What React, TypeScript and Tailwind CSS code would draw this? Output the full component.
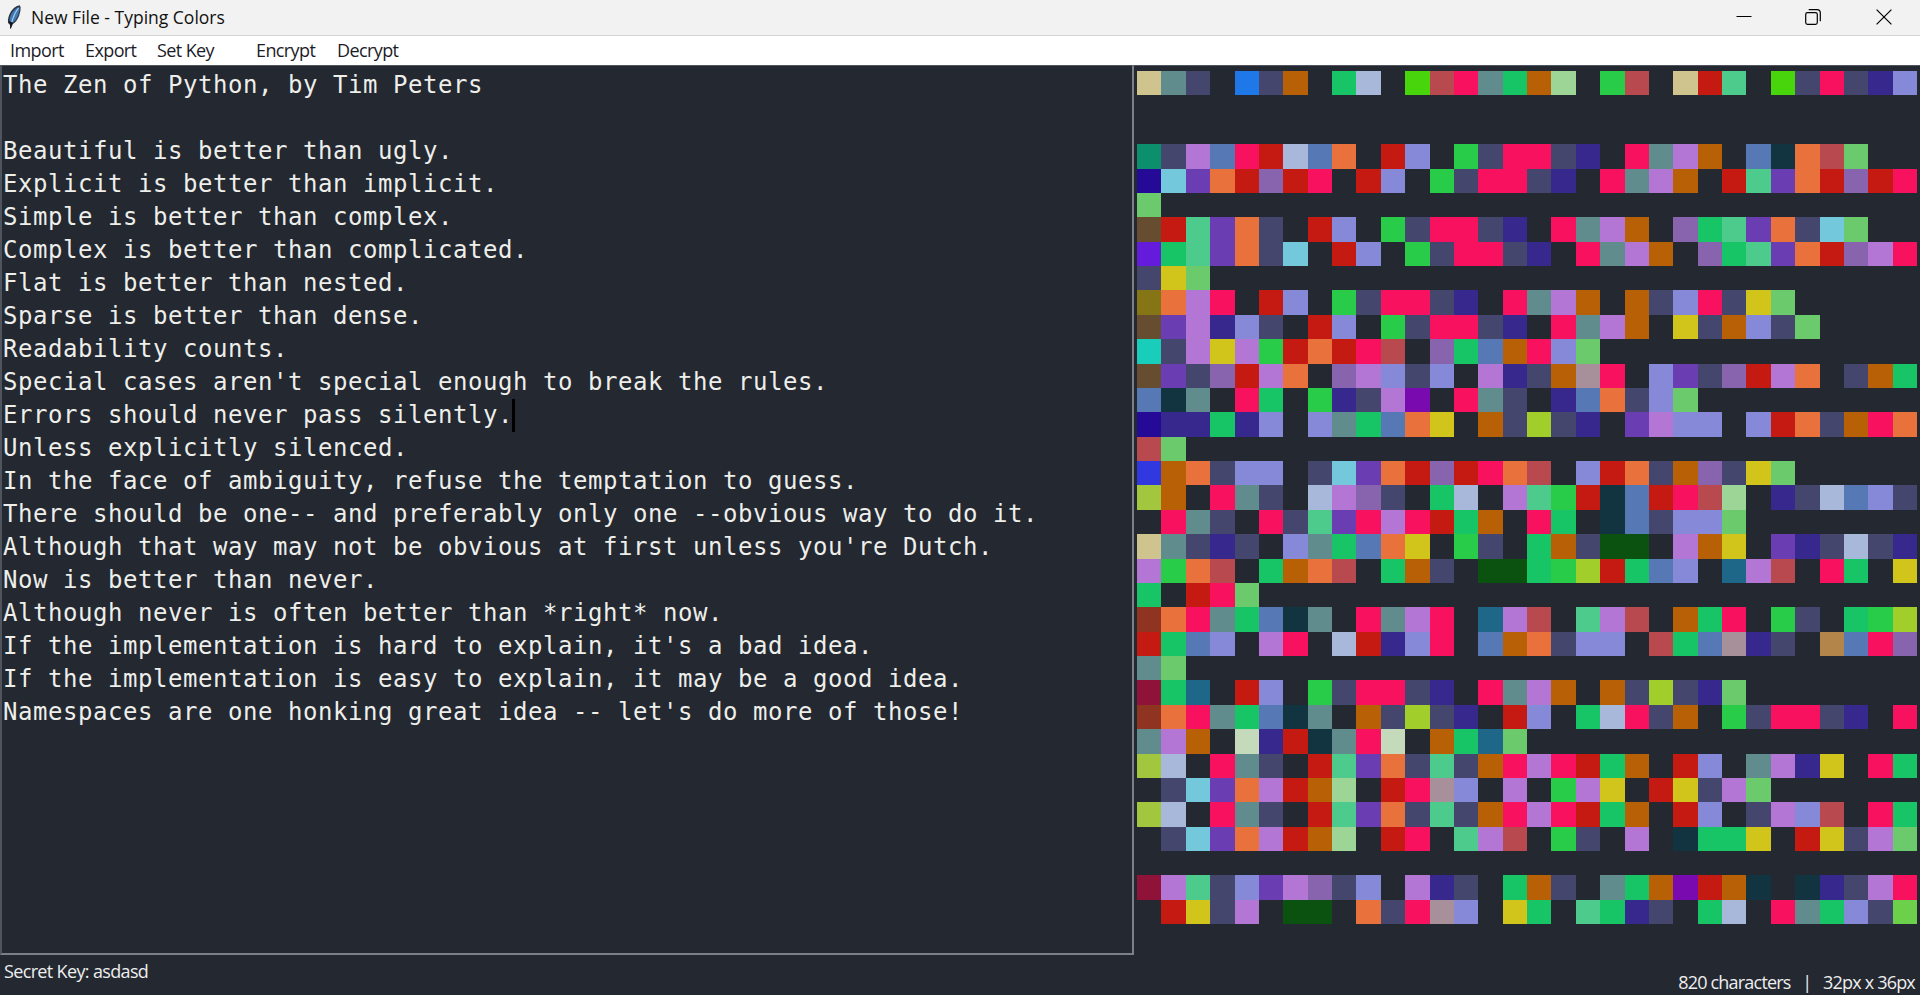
const COLUMNS = 32;
const ROWS = 36;

const LINES: string[] = [
  'The Zen of Python, by Tim Peters',
  '',
  'Beautiful is better than ugly.',
  'Explicit is better than implicit.',
  'Simple is better than complex.',
  'Complex is better than complicated.',
  'Flat is better than nested.',
  'Sparse is better than dense.',
  'Readability counts.',
  "Special cases aren't special enough to break the rules.",
  'Errors should never pass silently.',
  'Unless explicitly silenced.',
  'In the face of ambiguity, refuse the temptation to guess.',
  'There should be one-- and preferably only one --obvious way to do it.',
  "Although that way may not be obvious at first unless you're Dutch.",
  'Now is better than never.',
  'Although never is often better than *right* now.',
  "If the implementation is hard to explain, it's a bad idea.",
  'If the implementation is easy to explain, it may be a good idea.',
  "Namespaces are one honking great idea -- let's do more of those!",
];

const CARET_LINE = 10;

const COLORS: Record<string, string> = {
  T: 'bg-[#cfc48e]',
  h: 'bg-[#608c8e]',
  e: 'bg-[#45466e]',
  Z: 'bg-[#1f78e8]',
  n: 'bg-[#b76005]',
  o: 'bg-[#18c566]',
  f: 'bg-[#a8b8da]',
  P: 'bg-[#49d50b]',
  y: 'bg-[#b84a4f]',
  t: 'bg-[#f8115e]',
  ',': 'bg-[#9cd595]',
  b: 'bg-[#28cc49]',
  i: 'bg-[#c41a12]',
  m: 'bg-[#4dcb8c]',
  r: 'bg-[#37288e]',
  s: 'bg-[#8688d8]',
  B: 'bg-[#0b8f6d]',
  a: 'bg-[#b476d5]',
  u: 'bg-[#5678b4]',
  l: 'bg-[#e8713c]',
  g: 'bg-[#123440]',
  '.': 'bg-[#6aca6c]',
  E: 'bg-[#240a96]',
  x: 'bg-[#74c8db]',
  p: 'bg-[#6a3db3]',
  c: 'bg-[#8964ae]',
  S: 'bg-[#674d30]',
  C: 'bg-[#641bdb]',
  d: 'bg-[#d1c51b]',
  F: 'bg-[#867515]',
  R: 'bg-[#18cdb9]',
  k: 'bg-[#780ab0]',
  "'": 'bg-[#a8909a]',
  U: 'bg-[#3238e0]',
  v: 'bg-[#a1ce2b]',
  I: 'bg-[#a2c73e]',
  '-': 'bg-[#0b510f]',
  A: 'bg-[#8e3421]',
  w: 'bg-[#1e6789]',
  D: 'bg-[#b3854a]',
  N: 'bg-[#8f1238]',
  '*': 'bg-[#c5dabb]',
  '!': 'bg-[#6dd04b]',
};

// A line that fills its last row exactly still pushes the next one down a row.
function toRows(lines: string[]): string[] {
  const rows: string[] = [];
  for (const line of lines) {
    const count = Math.floor(line.length / COLUMNS) + 1;
    for (let i = 0; i < count; i++) {
      rows.push(line.slice(i * COLUMNS, (i + 1) * COLUMNS));
    }
  }
  return rows.slice(0, ROWS);
}

function Feather() {
  return (
    <svg className="h-6 w-4" viewBox="0 0 16 24" fill="none">
      <path d="M14 1C10.500 1.200 6 5 4 10C2.800 13 2.300 16 3.200 18.500L4.800 22.500L6 19C9.500 17.500 11.500 13.500 12.800 9.500C13.700 6.500 14.300 3.500 14 1Z" fill="#4078b4" />
      <path d="M14 1C10.500 1.200 6 5 4 10C2.800 13 2.300 16 3.200 18.500" stroke="#2b3440" strokeWidth="1.600" />
      <path d="M12.500 3C9.500 7 7 12 5.600 18" stroke="#a9cbeb" strokeWidth="1.200" />
      <path d="M14 1.500C14.300 6 12.500 14.500 6.500 18.500" stroke="#31404f" strokeWidth="1.300" />
      <path d="M3 16.500L4.500 20V23.500L6.800 18Z" fill="#111418" stroke="#111418" strokeWidth="0.800" />
    </svg>
  );
}

function TitleBar() {
  return (
    <header className="flex h-[35px] items-center justify-between bg-[#f2f2f2] pb-px pl-1.5">
      <div className="flex items-center gap-[9px]">
        <Feather />
        <h1 className="pb-px text-[17.5px] leading-6 whitespace-nowrap text-[#111111]">
          New File - Typing Colors
        </h1>
      </div>
      <div className="flex items-center pr-[28px] pb-px text-black">
        <svg className="mr-[53px] h-4 w-4" viewBox="0 0 16 16" fill="none" stroke="currentColor">
          <path d="M0.500 7.500H15.500" />
        </svg>
        <svg className="mr-[55px] h-4 w-4" viewBox="0 0 16 16" fill="none" stroke="currentColor" strokeWidth="1.200">
          <rect x="0.700" y="3.700" width="11.600" height="11.600" rx="1.800" />
          <path d="M3.700 0.700H12Q15.300 0.700 15.300 4V12.300" />
        </svg>
        <svg className="h-4 w-4" viewBox="0 0 16 16" fill="none" stroke="currentColor" strokeWidth="1.200">
          <path d="M0.600 0.600L15.400 15.400M15.400 0.600L0.600 15.400" />
        </svg>
      </div>
    </header>
  );
}

function MenuBar() {
  return (
    <nav className="flex h-[30px] items-center border-t border-[#d4d4d4] bg-white pb-0.5 pl-2.5 text-[18px] leading-6 tracking-[-0.6px] text-[#1c1c28]">
      <span className="w-[75px]">Import</span>
      <span className="w-[72px]">Export</span>
      <span className="w-[99px]">Set Key</span>
      <span className="w-[81px]">Encrypt</span>
      <span>Decrypt</span>
    </nav>
  );
}

function Editor() {
  return (
    <div className="h-[890px] w-[1134px] border-t border-r-2 border-b-2 border-l-2 border-t-[#50545c] border-r-[#7b7f86] border-b-[#7b7f86] border-l-[#50545c] pt-[3px] pl-[1px] font-['DejaVu_Sans_Mono',monospace] text-[24px] leading-[33px] tracking-[0.55px] text-[#eeeeea]">
      {LINES.map((line, index) => (
        <div key={index} className="flex h-[33px] whitespace-pre">
          {line}
          {index === CARET_LINE && <span className="-ml-px h-[33px] w-[3px] bg-black" />}
        </div>
      ))}
    </div>
  );
}

function ColorGrid() {
  const rows = toRows(LINES);
  return (
    <div className="mt-[6px] ml-[3px] w-[780px]">
      {rows.map((row, y) => (
        <div key={y} className="grid h-[24.39px] grid-cols-[repeat(32,24.375px)]">
          {Array.from({ length: COLUMNS }, (_, x) => (
            <div key={x} className={COLORS[row[x]] ?? ''} />
          ))}
        </div>
      ))}
    </div>
  );
}

export default function App() {
  return (
    <div className="flex h-[995px] w-[1920px] flex-col overflow-hidden bg-[#232831] font-['Open_Sans',sans-serif]">
      <TitleBar />
      <MenuBar />
      <main className="flex h-[890px] border-t border-[#50545c]">
        <div className="-mt-px flex">
          <Editor />
          <ColorGrid />
        </div>
      </main>
      <footer className="flex h-[40px] justify-between pr-[5px] pl-1 text-[18px] leading-6 text-[#eeeeee]">
        <span className="pt-1 tracking-[-0.65px]">Secret Key: asdasd</span>
        <span className="pt-[15px] tracking-[-0.8px] whitespace-pre">820 characters   |   32px x 36px</span>
      </footer>
    </div>
  );
}
